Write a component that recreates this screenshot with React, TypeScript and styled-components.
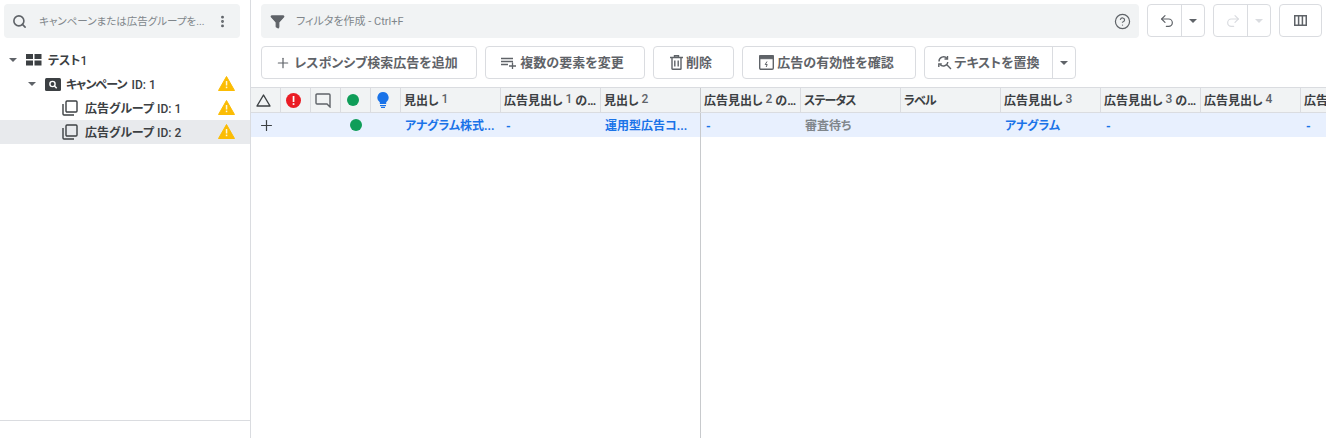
import styled, { createGlobalStyle } from "styled-components";
import { Filter, Search, Plus, Undo2, Redo2, CircleHelp, MoreVertical } from "lucide-react";

const GlobalStyle = createGlobalStyle`
  html, body { margin: 0; padding: 0; background: #fff; }
  body {
    font-family: Roboto, "Noto Sans CJK JP", sans-serif;
    font-feature-settings: "palt";
    overflow: hidden;
  }
`;

const Caret = ({ color = "#5f6368" }: { color?: string }) => (
  <svg width="8" height="4" viewBox="0 0 8 4"><path d="M0 0h8L4 4z" fill={color} /></svg>
);

const Warn = () => (
  <WarnBox>
    <svg width="17" height="15" viewBox="0 0 17 15">
      <path d="M8.5 0.5 16.5 14.5H0.5z" fill="#fbbc04" stroke="#fbbc04" strokeLinejoin="round" />
      <rect x="7.8" y="5" width="1.5" height="4.5" fill="#fff7d6" />
      <rect x="7.8" y="10.6" width="1.5" height="1.6" fill="#fff7d6" />
    </svg>
  </WarnBox>
);

const AdGroupIcon = () => (
  <svg width="16" height="16" viewBox="0 0 16 16" fill="none" stroke="#3c4043" strokeWidth="1.4">
    <rect x="4" y="1" width="11" height="11" rx="1" />
    <path d="M1 4v10a1 1 0 0 0 1 1h10" />
  </svg>
);

const App = () => {
  const frozen = [
    { w: 100, label: "見出し", num: "1" },
    { w: 100, label: "広告見出し", num: "1", rest: " の…" },
    { w: 100, label: "見出し", num: "2" },
  ];
  const scroll = [
    { w: 100, label: "広告見出し", num: "2", rest: " の…" },
    { w: 100, label: <Tight>ステータス</Tight> },
    { w: 100, label: <Tight>ラベル</Tight> },
    { w: 100, label: "広告見出し", num: "3" },
    { w: 100, label: "広告見出し", num: "3", rest: " の…" },
    { w: 100, label: "広告見出し", num: "4" },
    { w: 100, label: "広告" },
  ];
  return (
    <Page>
      <GlobalStyle />
      <Sidebar>
        <SideSearch>
          <Search size={15} color="#5f6368" strokeWidth={2.6} />
          <SideSearchText>キャンペーンまたは広告グループを...</SideSearchText>
          <MoreVertical size={15} color="#5f6368" strokeWidth={2.6} />
        </SideSearch>
        <Tree>
          <TreeRow $indent={9}>
            <Caret />
            <IconSlot $left={9}>
              <svg width="16" height="12" viewBox="0 0 16 12" fill="#3c4043">
                <rect x="0" y="0" width="7" height="5" /><rect x="8.5" y="0" width="7" height="5" />
                <rect x="0" y="6.5" width="7" height="5" /><rect x="8.5" y="6.5" width="7" height="5" />
              </svg>
            </IconSlot>
            <TreeLabel $left={6}>テスト<Num>1</Num></TreeLabel>
          </TreeRow>
          <TreeRow $indent={28}>
            <Caret />
            <IconSlot $left={9}>
              <svg width="16" height="13" viewBox="0 0 16 13">
                <rect width="16" height="13" rx="1.5" fill="#3c4043" />
                <circle cx="7.5" cy="6" r="2.6" fill="none" stroke="#fff" strokeWidth="1.4" />
                <path d="M9.5 8l2.2 2.2" stroke="#fff" strokeWidth="1.5" />
              </svg>
            </IconSlot>
            <TreeLabel $left={5}><Tight>キャンペーン</Tight> <Num>ID: 1</Num></TreeLabel>
            <Warn />
          </TreeRow>
          <TreeRow $indent={62}>
            <AdGroupIcon />
            <TreeLabel $left={7}>広告グループ <Num>ID: 1</Num></TreeLabel>
            <Warn />
          </TreeRow>
          <TreeRow $indent={62} $selected>
            <AdGroupIcon />
            <TreeLabel $left={7}>広告グループ <Num>ID: 2</Num></TreeLabel>
            <Warn />
          </TreeRow>
        </Tree>
        <SideFooter />
      </Sidebar>
      <Main>
        <TopBar>
          <FilterBar>
            <Filter size={15} color="#5f6368" fill="#5f6368" />
            <FilterText>フィルタを作成 - Ctrl+F</FilterText>
            <CircleHelp size={17} color="#5f6368" strokeWidth={1.7} />
          </FilterBar>
          <SplitGroup $gap={8}>
            <Split>
              <SplitMain><Undo2 size={16} color="#5f6368" strokeWidth={1.8} /></SplitMain>
              <SplitCaret><Caret /></SplitCaret>
            </Split>
            <Split>
              <SplitMain><Redo2 size={16} color="#dadce0" strokeWidth={1.8} /></SplitMain>
              <SplitCaret><Caret color="#dadce0" /></SplitCaret>
            </Split>
            <ColumnsButton>
              <svg width="13" height="11" viewBox="0 0 13 11" fill="none" stroke="#5f6368" strokeWidth="1.5">
                <rect x="0.75" y="0.75" width="11.5" height="9.5" /><path d="M4.6 1v9M8.4 1v9" />
              </svg>
            </ColumnsButton>
          </SplitGroup>
        </TopBar>
        <ActionBar>
          <ActionButton $w={216}>
            <Plus size={16} color="#5f6368" strokeWidth={1.8} />
            <ButtonLabel>レスポンシブ検索広告を追加</ButtonLabel>
          </ActionButton>
          <ActionButton $w={160}>
            <svg width="16" height="12" viewBox="0 0 16 12" fill="none" stroke="#5f6368" strokeWidth="1.3">
              <path d="M0 1.5h12M0 4.5h12M0 7.5h7M8 9h7M11.5 5.5v6.5" />
            </svg>
            <ButtonLabel>複数の要素を変更</ButtonLabel>
          </ActionButton>
          <ActionButton $w={81}>
            <svg width="13" height="15" viewBox="0 0 13 15" fill="none" stroke="#5f6368" strokeWidth="1.4">
              <path d="M0 2.5h13M4.5 2.5V.8h4v1.7M2 2.5v11.2a.6.6 0 0 0 .6.6h7.8a.6.6 0 0 0 .6-.6V2.5M4.8 5.5v6M8.2 5.5v6" />
            </svg>
            <ButtonLabel>削除</ButtonLabel>
          </ActionButton>
          <ActionButton $w={174}>
            <svg width="15" height="15" viewBox="0 0 15 15" fill="none" stroke="#5f6368">
              <rect x="0.7" y="0.7" width="13.6" height="13.6" rx="1.2" strokeWidth="1.4" />
              <rect x="0.7" y="0.7" width="13.6" height="3" fill="#5f6368" />
              <path d="M8 6.5 6.2 9.5h2L7.2 12" strokeWidth="1" />
            </svg>
            <ButtonLabel>広告の有効性を確認</ButtonLabel>
          </ActionButton>
          <Split>
            <ReplaceMain>
              <svg width="15" height="15" viewBox="0 0 15 15" fill="none" stroke="#5f6368" strokeWidth="1.4">
                <path d="M2 6.5A4.5 4.5 0 0 1 10 3.5M10.8 7A4.5 4.5 0 0 1 3 9.5M9.6 9.6 14 14" />
                <path d="M10.5 1v3H7.5M1.8 12V9h3" />
              </svg>
              <ButtonLabel>テキストを置換</ButtonLabel>
            </ReplaceMain>
            <ReplaceCaret><Caret /></ReplaceCaret>
          </Split>
        </ActionBar>
        <Grid>
          <HeaderRow>
            <HeaderIcon>
              <svg width="15" height="13" viewBox="0 0 15 13" fill="none" stroke="#3c4043" strokeWidth="1.4"><path d="M7.5 1 14 12H1z" strokeLinejoin="round" /></svg>
            </HeaderIcon>
            <HeaderIcon>
              <svg width="15" height="15" viewBox="0 0 15 15">
                <circle cx="7.5" cy="7.5" r="7.5" fill="#ea1c24" />
                <rect x="6.7" y="3" width="1.7" height="6" fill="#fff" /><rect x="6.7" y="10.2" width="1.7" height="1.7" fill="#fff" />
              </svg>
            </HeaderIcon>
            <HeaderIcon>
              <svg width="16" height="15" viewBox="0 0 16 15" fill="none" stroke="#5f6368" strokeWidth="1.4"><path d="M2 1h12a1 1 0 0 1 1 1v12l-3-3H2a1 1 0 0 1-1-1V2a1 1 0 0 1 1-1z" /></svg>
            </HeaderIcon>
            <HeaderIcon><Dot $size={12} /></HeaderIcon>
            <HeaderIcon>
              <svg width="12" height="16" viewBox="0 0 12 16" fill="#1a73e8">
                <path d="M6 0a5.6 5.6 0 0 0-3.2 10.2V12h6.4v-1.8A5.6 5.6 0 0 0 6 0z" /><rect x="3" y="13" width="6" height="1.2" /><rect x="4" y="14.8" width="4" height="1.2" />
              </svg>
            </HeaderIcon>
            {frozen.map((c, i) => (
              <HeaderCell key={i} $w={c.w}>{c.label} <Num $muted>{c.num}</Num>{c.rest}</HeaderCell>
            ))}
            <Divider />
            {scroll.map((c, i) => (
              <HeaderCell key={i} $w={c.w}>{c.label} {c.num && <Num $muted>{c.num}</Num>}{c.rest}</HeaderCell>
            ))}
          </HeaderRow>
          <DataRow>
            <AddCell><Plus size={17} color="#3c4043" strokeWidth={1.7} /></AddCell>
            <BlankCell $w={60} />
            <DotCell><Dot $size={12} /></DotCell>
            <BlankCell $w={30} />
            <LinkCell $w={100}>アナグラム株式...</LinkCell>
            <DashCell $w={100}>-</DashCell>
            <LinkCell $w={100}>運用型広告コ...</LinkCell>
            <Divider />
            <DashCell $w={100}>-</DashCell>
            <StatusCell $w={100}>審査待ち</StatusCell>
            <BlankCell $w={100} />
            <LinkCell $w={100}>アナグラム</LinkCell>
            <DashCell $w={100}>-</DashCell>
            <BlankCell $w={100} />
            <DashCell $w={100}>-</DashCell>
          </DataRow>
          <GridBody>
            <FrozenArea />
          </GridBody>
        </Grid>
      </Main>
    </Page>
  );
};

export default App;

const Page = styled.div`
  display: flex;
  width: 1326px;
  height: 438px;
  overflow: hidden;
  color: #3c4043;
`;

const Sidebar = styled.aside`
  width: 250px;
  flex: none;
  display: flex;
  flex-direction: column;
  border-right: 1px solid #dadce0;
`;

const SideSearch = styled.div`
  margin: 4px 10px 0 4px;
  height: 34px;
  flex: none;
  display: flex;
  align-items: center;
  padding: 0 10px 0 8px;
  background: #f1f3f4;
  border-radius: 4px;
`;

const SideSearchText = styled.span`
  flex: 1;
  min-width: 0;
  margin-left: 12px;
  padding-bottom: 2px;
  font-size: 10.5px;
  color: #80868b;
  white-space: nowrap;
`;

const Tree = styled.div`
  margin-top: 10px;
  flex: 1;
`;

const TreeRow = styled.div<{ $indent: number; $selected?: boolean }>`
  height: 24px;
  display: flex;
  align-items: center;
  padding-left: ${(p) => p.$indent}px;
  padding-right: 15px;
  background: ${(p) => (p.$selected ? "#e8eaed" : "transparent")};
`;

const IconSlot = styled.span<{ $left: number }>`
  display: flex;
  margin-left: ${(p) => p.$left}px;
`;

const TreeLabel = styled.span<{ $left: number }>`
  margin-left: ${(p) => p.$left}px;
  padding-bottom: 2px;
  font-size: 12px;
  font-weight: 700;
  color: #3c4043;
  white-space: pre;
`;

const Tight = styled.span`
  letter-spacing: -0.9px;
  padding-right: 2px;
`;

const WarnBox = styled.span`
  margin-left: auto;
  padding-bottom: 2px;
  display: flex;
`;

const Num = styled.span<{ $muted?: boolean }>`
  font-weight: 500;
  color: ${(p) => (p.$muted ? "#5f6368" : "#3c4043")};
`;

const SideFooter = styled.div`
  height: 17px;
  flex: none;
  border-top: 1px solid #dadce0;
`;

const Main = styled.main`
  flex: 1;
  min-width: 0;
  display: flex;
  flex-direction: column;
`;

const TopBar = styled.div`
  display: flex;
  padding: 4px 0 0 10px;
  height: 34px;
  box-sizing: content-box;
`;

const FilterBar = styled.div`
  width: 878px;
  height: 34px;
  box-sizing: border-box;
  display: flex;
  align-items: center;
  padding: 0 8px 0 9px;
  background: #f1f3f4;
  border-radius: 4px;
`;

const FilterText = styled.span`
  flex: 1;
  margin-left: 11px;
  padding-bottom: 2px;
  font-size: 11px;
  color: #80868b;
`;

const SplitGroup = styled.div<{ $gap: number }>`
  display: flex;
  gap: ${(p) => p.$gap}px;
  margin-left: 8px;
  height: 33px;
`;

const Split = styled.div`
  display: flex;
  height: 33px;
  border: 1px solid #dadce0;
  border-radius: 4px;
  box-sizing: border-box;
  background: #fff;
`;

const SplitMain = styled.div`
  width: 34px;
  box-sizing: border-box;
  padding-left: 5px;
  display: flex;
  align-items: center;
  justify-content: center;
  border-right: 1px solid #dadce0;
`;

const SplitCaret = styled.div`
  width: 22px;
  display: flex;
  align-items: center;
  justify-content: center;
`;

const ColumnsButton = styled.div`
  width: 43px;
  height: 33px;
  box-sizing: border-box;
  display: flex;
  align-items: center;
  justify-content: center;
  border: 1px solid #dadce0;
  border-radius: 4px;
`;

const ActionBar = styled.div`
  display: flex;
  gap: 8px;
  padding: 8px 0 0 10px;
  height: 33px;
  box-sizing: content-box;
`;

const ActionButton = styled.div<{ $w: number }>`
  width: ${(p) => p.$w}px;
  height: 33px;
  box-sizing: border-box;
  padding-right: 5px;
  display: flex;
  align-items: center;
  justify-content: center;
  gap: 3px;
  border: 1px solid #dadce0;
  border-radius: 4px;
  color: #5f6368;
  white-space: nowrap;
`;

const ButtonLabel = styled.span`
  padding-bottom: 3px;
  font-size: 13px;
  font-weight: 700;
  color: #5f6368;
`;

const ReplaceMain = styled.div`
  width: 127px;
  display: flex;
  align-items: center;
  justify-content: center;
  gap: 2px;
  border-right: 1px solid #dadce0;
  white-space: nowrap;
`;

const ReplaceCaret = styled.div`
  width: 22px;
  display: flex;
  align-items: center;
  justify-content: center;
`;

const Grid = styled.div`
  margin-top: 8px;
  flex: 1;
  display: flex;
  flex-direction: column;
  min-height: 0;
`;

const HeaderRow = styled.div`
  display: flex;
  height: 26px;
  flex: none;
  box-sizing: border-box;
  background: #f1f3f4;
  border-top: 1px solid #dadce0;
  border-bottom: 1px solid #dadce0;
`;

const HeaderIcon = styled.div`
  width: 30px;
  flex: none;
  box-sizing: border-box;
  display: flex;
  align-items: center;
  justify-content: center;
  padding-right: 5px;
  border-right: 1px solid #dadce0;
`;

const HeaderCell = styled.div<{ $w: number }>`
  width: ${(p) => p.$w}px;
  flex: none;
  box-sizing: border-box;
  padding: 0 0 2px 3px;
  display: flex;
  align-items: center;
  white-space: pre;
  overflow: hidden;
  font-size: 12px;
  font-weight: 700;
  color: #3c4043;
  border-right: 1px solid #dadce0;
`;

const Divider = styled.div`
  width: 1px;
  flex: none;
  margin-left: -1px;
  background: #c8cacd;
`;

const DataRow = styled.div`
  display: flex;
  height: 24px;
  flex: none;
  background: #e8f0fe;
`;

const AddCell = styled.div`
  width: 30px;
  flex: none;
  display: flex;
  align-items: center;
  justify-content: center;
`;

const DotCell = styled.div`
  width: 30px;
  flex: none;
  display: flex;
  align-items: center;
  justify-content: center;
`;

const Dot = styled.span<{ $size: number }>`
  width: ${(p) => p.$size}px;
  height: ${(p) => p.$size}px;
  border-radius: 50%;
  background: #0f9d58;
`;

const BlankCell = styled.div<{ $w: number }>`
  width: ${(p) => p.$w}px;
  flex: none;
`;

const LinkCell = styled.div<{ $w: number }>`
  width: ${(p) => p.$w}px;
  flex: none;
  box-sizing: border-box;
  padding: 0 0 2px 4px;
  display: flex;
  align-items: center;
  white-space: nowrap;
  overflow: hidden;
  font-size: 12px;
  font-weight: 700;
  color: #1a73e8;
`;

const DashCell = styled(LinkCell)`
  padding: 3px 0 0 5px;
`;

const StatusCell = styled(LinkCell)`
  color: #80868b;
`;

const GridBody = styled.div`
  flex: 1;
  display: flex;
`;

const FrozenArea = styled.div`
  width: 449px;
  flex: none;
  border-right: 1px solid #c8cacd;
`;
